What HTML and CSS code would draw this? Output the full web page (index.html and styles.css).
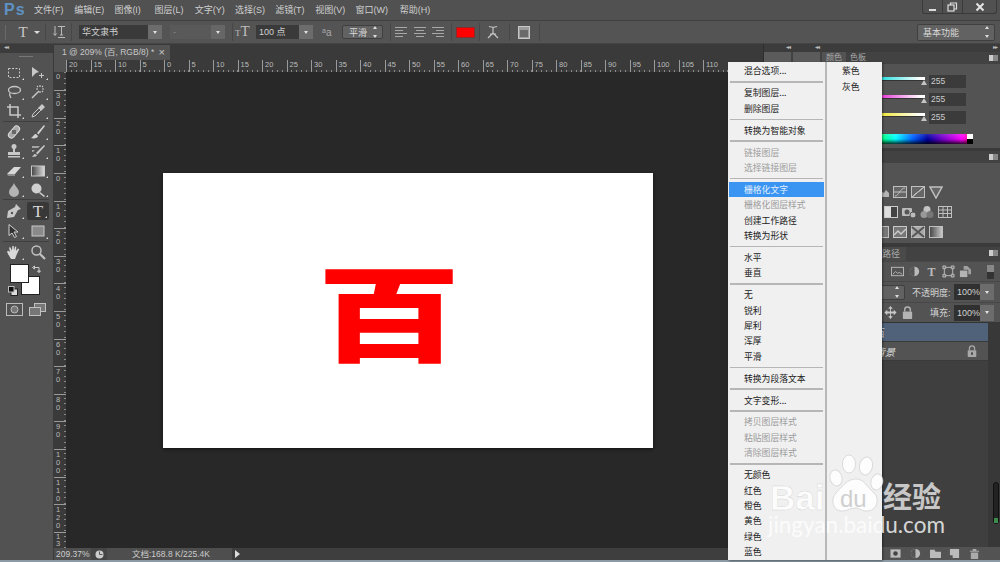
FILE: index.html
```html
<!DOCTYPE html>
<html lang="zh">
<head>
  <meta charset="UTF-8">
  <title>Photoshop</title>
  <link rel="stylesheet" href="styles.css">
</head>
<body>
  <!-- Menu bar -->
  <header class="menubar">
    <span class="logo">Ps</span>
    <nav class="menus">
      <span>文件(F)</span><span>编辑(E)</span><span>图像(I)</span><span>图层(L)</span><span>文字(Y)</span>
      <span>选择(S)</span><span>滤镜(T)</span><span>视图(V)</span><span>窗口(W)</span><span class="help">帮助(H)</span>
    </nav>
    <div class="winbtns">
      <span class="winbtn"><svg width="10" height="10" viewBox="0 0 10 10"><rect x="1" y="7" width="7" height="2" fill="#ddd"/></svg></span>
      <span class="winbtn"><svg width="11" height="10" viewBox="0 0 11 10" fill="none" stroke="#ddd" stroke-width="1.2"><rect x="1" y="3" width="6" height="6"/><path d="M3.5 3V1h6v6H7"/></svg></span>
      <span class="winbtn wide"><svg width="10" height="10" viewBox="0 0 10 10" stroke="#e4e4e4" stroke-width="2"><path d="M1.5 1.5l7 7M8.5 1.5l-7 7"/></svg></span>
    </div>
  </header>

  <!-- Options bar -->
  <section class="options">
    <span class="grip"></span>
    <span class="opt-t">T</span>
    <span class="caret"></span>
    <span class="opt-sep s1"></span>
    <svg class="opt-orient" width="14" height="14" viewBox="0 0 14 14" fill="none" stroke="#bbb"><path d="M3 1v9M1.5 8.500L3 10.500l1.500-2M6 1.500h7M9.500 1.500V10M8 10h3M6 12.500h7"/></svg>
    <span class="opt-sep s2"></span>
    <div class="combo font"><span class="combo-text">华文隶书</span><i class="combo-btn"></i></div>
    <div class="combo style off"><span class="combo-text">-</span><i class="combo-btn"></i></div>
    <span class="opt-sep s3"></span>
    <span class="opt-size"><small>T</small>T</span>
    <div class="combo size"><span class="combo-text">100 点</span><i class="combo-btn"></i></div>
    <span class="opt-aa"><small>a</small>a</span>
    <div class="spin aa"><span>平滑</span><i class="updown"></i></div>
    <span class="opt-sep s4"></span>
    <div class="aligns">
      <svg width="14" height="12" viewBox="0 0 14 12" stroke="#a8a8a8"><path d="M1 1.500h12M1 4.500h8M1 7.500h12M1 10.500h8"/></svg>
      <svg width="14" height="12" viewBox="0 0 14 12" stroke="#a8a8a8"><path d="M1 1.500h12M3 4.500h8M1 7.500h12M3 10.500h8"/></svg>
      <svg width="14" height="12" viewBox="0 0 14 12" stroke="#a8a8a8"><path d="M1 1.500h12M5 4.500h8M1 7.500h12M5 10.500h8"/></svg>
    </div>
    <span class="opt-sep s5"></span>
    <span class="swatch"></span>
    <span class="opt-sep s6"></span>
    <svg class="opt-warp" width="14" height="17" viewBox="0 0 14 17" fill="none" stroke="#c4c4c4" stroke-width="1.200"><path d="M3 2.500q4 1.500 8 0M7 3v6M7 9l-5 5M7 9l5 5M4 10h6"/></svg>
    <span class="opt-sep s7"></span>
    <svg class="opt-panel" width="12" height="13" viewBox="0 0 12 13"><rect x=".5" y=".5" width="11" height="12" fill="#9c9c9c" stroke="#c8c8c8"/><rect x="2" y="4" width="8" height="7" fill="#6a6a6a"/></svg>
    <span class="opt-sep s7"></span>
    <div class="spin workspace"><span>基本功能</span><i class="updown"></i></div>
  </section>

  <main class="workspace-row">
    <!-- Tools -->
    <aside class="toolbar">
      <div class="strip"><span class="arrows">◂◂</span></div>
      <span class="tool-grip"></span>
      <div class="tools">
        <span class="tool"><svg viewBox="0 0 16 16" fill="none" stroke="#c8c8c8" stroke-dasharray="2 1.500"><rect x="2.500" y="3.500" width="11" height="9"/></svg></span>
        <span class="tool"><svg viewBox="0 0 16 16" fill="#c8c8c8"><path d="M2 2l7 5-3 1-4 4z"/><path d="M11 8h1v2h2v1h-2v2h-1v-2H9v-1h2z"/></svg></span>
        <span class="tool"><svg viewBox="0 0 16 16" fill="none" stroke="#c8c8c8" stroke-width="1.300"><ellipse cx="8.500" cy="6" rx="6" ry="3.500"/><path d="M4 9c-1 2 0 3 1 5"/></svg></span>
        <span class="tool"><svg viewBox="0 0 16 16" fill="none" stroke="#c8c8c8" stroke-width="1.500"><path d="M2 14l7-7"/><path d="M10 1v2M10 7v2M6 5h2M12 5h2M7 2l1 1M13 2l-1 1M13 8l-1-1" stroke-width="1.200"/></svg></span>
        <span class="tool"><svg viewBox="0 0 16 16" fill="none" stroke="#c8c8c8" stroke-width="1.500"><path d="M4 1v11h11M1 4h11v11"/></svg></span>
        <span class="tool"><svg viewBox="0 0 16 16" fill="#c8c8c8"><path d="M2 14l1-3 6-6 2 2-6 6z" fill="none" stroke="#c8c8c8"/><path d="M9 4l3-3 3 3-3 3 0 1-4-4z"/></svg></span>
        <span class="tool-sep"></span>
        <span class="tool"><svg viewBox="0 0 16 16" fill="#a8a8a8" stroke="#ddd"><rect x="1" y="5" width="14" height="6" rx="3" transform="rotate(-50 8 8)"/><rect x="6" y="6" width="4" height="4" fill="#666" stroke="none"/></svg></span>
        <span class="tool"><svg viewBox="0 0 16 16" fill="#d0d0d0"><path d="M14 1L7 9l1.500 1.500L15 2z"/><path d="M6 10c-2 0-2 2-5 4 3 1 7 0 7-2z"/></svg></span>
        <span class="tool"><svg viewBox="0 0 16 16" fill="#c8c8c8"><circle cx="8" cy="3.500" r="2.500"/><rect x="7" y="5" width="2" height="4"/><rect x="2" y="9" width="12" height="3"/><rect x="2" y="13" width="12" height="1.500"/></svg></span>
        <span class="tool"><svg viewBox="0 0 16 16" fill="#c8c8c8"><path d="M14 2L6 10l1.500 1.500L15 3z"/><path d="M5 11c-1 0-2 2-3 3 3 0 5-1 5-2z"/><path d="M2 3h8L8 5H2zM2 7h3L3 9H2z" opacity=".7"/></svg></span>
        <span class="tool"><svg viewBox="0 0 16 16" fill="#d8d8d8"><path d="M1 11l7-7h7l-6 7z"/><path d="M1 11h8v2H2z" fill="#8c8c8c"/></svg></span>
        <span class="tool"><svg viewBox="0 0 16 16"><defs><linearGradient id="gr"><stop offset="0" stop-color="#444"/><stop offset="1" stop-color="#ddd"/></linearGradient></defs><rect x="1.500" y="3" width="13" height="10" fill="url(#gr)" stroke="#c8c8c8"/></svg></span>
        <span class="tool"><svg viewBox="0 0 16 16" fill="#b4b4b4"><path d="M8 1c1 3 5 6 5 9a5 5 0 0 1-10 0c0-3 4-6 5-9z"/></svg></span>
        <span class="tool"><svg viewBox="0 0 16 16" fill="#d0d0d0"><circle cx="6.500" cy="6.500" r="5"/><path d="M10 10l5 4-1 1-5-4z"/></svg></span>
        <span class="tool-sep"></span>
        <span class="tool"><svg viewBox="0 0 16 16" fill="#c8c8c8"><path d="M10 1l5 5-3 1-4 7-7 1 1-7 7-4z"/><circle cx="6" cy="10" r="1.200" fill="#535353"/></svg></span>
        <span class="tool active"><span class="tool-t">T</span></span>
        <span class="tool"><svg viewBox="0 0 16 16" fill="#333" stroke="#d0d0d0"><path d="M3 1.500v11l3-2.500 2.500 4.500 2-1L8 9h4z"/></svg></span>
        <span class="tool"><svg viewBox="0 0 16 16"><rect x="2" y="3" width="12" height="10" fill="#8a8a8a" stroke="#c8c8c8"/></svg></span>
        <span class="tool-sep"></span>
        <span class="tool"><svg viewBox="0 0 16 16" fill="#d8d8d8"><path d="M4 8L3 3.500l1.300-.3L6 6.500 6.300 2h1.400l.3 4.500L9 2.500l1.300.3L10 7l2-2.500 1.200.7L10.500 11 9 15H5L2 10 1 7.500l1.200-.8z"/></svg></span>
        <span class="tool plain"><svg viewBox="0 0 16 16" fill="none" stroke="#c0c0c0" stroke-width="1.500"><circle cx="6.500" cy="6.500" r="4.500"/><path d="M10 10l5 5" stroke-width="2.200"/></svg></span>
      </div>
      <div class="colors">
        <span class="color-bg"></span>
        <span class="color-fg"></span>
        <svg class="color-swap" width="10" height="10" viewBox="0 0 10 10" fill="none" stroke="#ccc"><path d="M2 3.500h5v5M.5 3.500L2.500 2v3zM7 8.500L5.500 7h3z"/></svg>
        <svg class="color-def" width="10" height="10" viewBox="0 0 10 10"><rect x="3" y="3" width="6.500" height="6.500" fill="#ddd" stroke="#222"/><rect x=".5" y=".5" width="5.500" height="5.500" fill="#111" stroke="#bbb"/></svg>
      </div>
      <div class="modes">
        <svg width="17" height="13" viewBox="0 0 17 13" fill="none" stroke="#bbb"><rect x=".5" y=".5" width="16" height="12"/><circle cx="8.500" cy="6.500" r="3.500" fill="#777"/></svg>
        <svg width="17" height="13" viewBox="0 0 17 13" fill="#777" stroke="#c0c0c0"><rect x="5.500" y=".5" width="11" height="8"/><rect x=".5" y="4.500" width="11" height="8"/></svg>
      </div>
    </aside>

    <!-- Document -->
    <section class="docarea">
      <div class="tabbar">
        <div class="doctab"><span>1 @ 209% (百, RGB/8) *</span><b>×</b></div>
      </div>
      <div class="ruler-h">
        <span class="corner-box"></span>
        <div class="h-marks">
          <span>20</span><span>15</span><span>10</span><span>5</span><span>0</span><span>5</span><span>10</span><span>15</span><span>20</span><span>25</span>
          <span>30</span><span>35</span><span>40</span><span>45</span><span>50</span><span>55</span><span>60</span><span>65</span><span>70</span><span>75</span>
          <span>80</span><span>85</span><span>90</span><span>95</span><span>100</span><span>105</span><span>110</span>
        </div>
      </div>
      <div class="doc-mid">
        <div class="ruler-v">
          <span class="first">0</span>
          <span>30</span><span>20</span><span>10</span><span>0</span><span>10</span><span>20</span><span>30</span><span>40</span><span>50</span>
          <span>60</span><span>70</span><span>80</span><span>90</span><span>100</span><span>110</span><span>120</span><span class="last">13</span>
        </div>
        <div class="pasteboard">
          <div class="canvas"><span class="glyph">百</span></div>
        </div>
      </div>
      <footer class="status">
        <span class="zoom">209.37%</span>
        <span class="st-icon"><svg width="9" height="9" viewBox="0 0 9 9"><circle cx="4.500" cy="4.500" r="4" fill="#ccc"/><path d="M4.500 1.500v3h3" stroke="#555" fill="none"/></svg></span>
        <span class="docsize">文档:168.8 K/225.4K</span>
        <span class="st-arrow"></span>
      </footer>
    </section>

    <!-- Right panels -->
    <aside class="panels">
      <div class="strip dock"><span class="arrows a1">◂◂</span><span class="arrows a2">◂◂</span><span class="arrows a3">▸▸</span></div>
      <div class="tabs">
        <span class="mini"></span><span class="mini"></span>
        <span class="ptab on">颜色</span><span class="ptab">色板</span>
        <i class="pmenu"></i>
      </div>
      <div class="color-panel">
        <div class="slider-row"><span class="slider cy"></span><span class="tri"></span><span class="num">255</span></div>
        <div class="slider-row"><span class="slider mg"></span><span class="tri"></span><span class="num">255</span></div>
        <div class="slider-row"><span class="slider ye"></span><span class="tri"></span><span class="num">255</span></div>
        <div class="spectrum"><i></i></div>
      </div>
      <div class="pheader"><i class="pmenu"></i></div>
      <div class="adjust">
        <div class="adj-row r1">
          <svg viewBox="0 0 14 14"><path d="M0 12h14V8L11 5 9 8 6 6 4 9 0 7z" fill="#b4b4b4"/></svg>
          <svg viewBox="0 0 14 14" fill="#666" stroke="#c0c0c0"><rect x=".5" y="1.500" width="13" height="11"/><path d="M2 11c4 0 5-8 10-8M1 7h12" fill="none"/></svg>
          <svg viewBox="0 0 14 14" stroke="#c0c0c0"><rect x=".5" y="1.500" width="13" height="11" fill="#666"/><path d="M1 12L13 2z" fill="#222"/><path d="M1 12L13 2" fill="none"/></svg>
          <svg viewBox="0 0 14 14" fill="#666" stroke="#c0c0c0" stroke-width="1.500"><path d="M1 2h12L7 13z"/></svg>
        </div>
        <div class="adj-row r2">
          <svg viewBox="0 0 14 14"><rect x=".5" y="1.500" width="13" height="11" fill="#ddd" stroke="#ccc"/><rect x="7" y="2" width="6" height="10" fill="#444"/></svg>
          <svg viewBox="0 0 14 14" fill="#bbb"><rect x="0" y="3" width="10" height="8" rx="1"/><circle cx="5" cy="7" r="2.500" fill="#555"/><circle cx="11" cy="10" r="3" stroke="#555"/></svg>
          <svg viewBox="0 0 14 14" fill="#c4c4c4"><circle cx="7" cy="4.500" r="3.500"/><circle cx="4" cy="9.500" r="3.500" fill="#999"/><circle cx="10" cy="9.500" r="3.500" fill="#777"/></svg>
          <svg viewBox="0 0 14 14" fill="none" stroke="#c0c0c0"><rect x=".5" y="1.500" width="13" height="11"/><path d="M.5 5h13M.5 8.500h13M5 1.500v11M9.500 1.500v11"/></svg>
        </div>
        <div class="adj-row r1">
          <svg viewBox="0 0 14 14"><rect x=".5" y="1.500" width="13" height="11" fill="#777" stroke="#c0c0c0"/></svg>
          <svg viewBox="0 0 14 14" fill="#777" stroke="#c8c8c8"><rect x=".5" y="1.500" width="13" height="11"/><path d="M1 10l4-4 3 3 5-5" fill="none" stroke-width="1.500"/></svg>
          <svg viewBox="0 0 14 14" fill="#aaa" stroke="#c0c0c0"><rect x=".5" y="1.500" width="13" height="11"/><path d="M1 2l12 10M13 2L1 12" stroke="#555" stroke-width="2"/></svg>
          <svg viewBox="0 0 14 14"><defs><linearGradient id="gm"><stop offset="0" stop-color="#444"/><stop offset="1" stop-color="#ccc"/></linearGradient></defs><rect x=".5" y="1.500" width="13" height="11" fill="url(#gm)" stroke="#c0c0c0"/></svg>
        </div>
      </div>
      <div class="tabs layers-tabs">
        <span class="ptab paths">路径</span>
        <i class="pmenu"></i>
      </div>
      <div class="filter-row">
        <svg viewBox="0 0 14 14" fill="none" stroke="#bbb"><rect x=".5" y="2.500" width="13" height="9"/><path d="M2 10l3-3 2 2 2-1 3 2" /></svg>
        <svg viewBox="0 0 14 14"><circle cx="7" cy="7" r="5" fill="#bbb"/><path d="M7 2a5 5 0 0 0 0 10z" fill="#555"/></svg>
        <span class="filter-t">T</span>
        <svg viewBox="0 0 14 14" fill="none" stroke="#bbb"><rect x="2.500" y="2.500" width="9" height="9"/><path d="M1 1h3v3H1zM10 1h3v3h-3zM1 10h3v3H1zM10 10h3v3h-3z" fill="#777"/></svg>
        <svg viewBox="0 0 14 14" fill="#b4b4b4"><path d="M1 6h8v7H1z"/><path d="M5 5V1h4l4 4v5h-3V5z" opacity=".8"/></svg>
        <span class="filter-toggle"></span>
      </div>
      <div class="mode-row">
        <div class="spin blend"><i class="updown"></i></div>
        <span class="lbl">不透明度:</span>
        <div class="combo pct"><span class="combo-text">100%</span><i class="combo-btn"></i></div>
      </div>
      <div class="lock-row">
        <svg viewBox="0 0 14 14" fill="#c8c8c8"><path d="M7 0l2.500 3h-2v3h3V4l3 3-3 3V8h-3v3h2L7 14l-2.500-3h2V8h-3v2l-3-3 3-3v2h3V3h-2z"/></svg>
        <svg viewBox="0 0 14 14" fill="#b4b4b4"><rect x="2" y="6" width="10" height="8" rx="1"/><path d="M4 6V4a3 3 0 0 1 6 0v2" fill="none" stroke="#b4b4b4" stroke-width="1.500"/></svg>
        <span class="lbl fill">填充:</span>
        <div class="combo pct"><span class="combo-text">100%</span><i class="combo-btn"></i></div>
      </div>
      <div class="layers">
        <div class="layer-list">
          <div class="layer sel"><span>百</span></div>
          <div class="layer bgl"><em>背景</em>
            <svg viewBox="0 0 14 14" fill="#a8a8a8"><rect x="2" y="6" width="10" height="8" rx="1"/><path d="M4 6V4a3 3 0 0 1 6 0v2" fill="none" stroke="#a8a8a8" stroke-width="1.500"/><rect x="6" y="8.500" width="2" height="3" fill="#444"/></svg>
          </div>
        </div>
        <div class="layer-scroll"><span class="scroll-thumb"><i></i></span></div>
      </div>
      <div class="layer-foot">
        <svg viewBox="0 0 12 12"><rect x=".5" y="1.500" width="11" height="9" fill="#bbb"/><circle cx="6" cy="6" r="2.500" fill="#444"/></svg>
        <svg viewBox="0 0 12 12"><circle cx="6" cy="6" r="5" fill="#bbb"/><path d="M6 1a5 5 0 0 0 0 10z" fill="#555"/></svg>
        <svg viewBox="0 0 12 12" fill="#bbb"><path d="M0 2h5l1 2h6v7H0z"/></svg>
        <svg viewBox="0 0 12 12" fill="#bbb"><path d="M1 1h10v10H4V8H1z"/></svg>
        <svg viewBox="0 0 12 12" fill="#aaa"><path d="M1 3h10v1H1zM4 1h4v2H4zM2 5h8v7H2z"/></svg>
      </div>
    </aside>
  </main>
  <div class="taskstrip"></div>

  <!-- Context menu -->
  <div class="ctx">
    <div class="ctx-main">
      <div class="mi">混合选项...</div>
      <div class="ms"></div>
      <div class="mi">复制图层...</div>
      <div class="mi">删除图层</div>
      <div class="ms"></div>
      <div class="mi">转换为智能对象</div>
      <div class="ms"></div>
      <div class="mi off">链接图层</div>
      <div class="mi off">选择链接图层</div>
      <div class="ms"></div>
      <div class="mi hl">栅格化文字</div>
      <div class="mi off">栅格化图层样式</div>
      <div class="mi">创建工作路径</div>
      <div class="mi">转换为形状</div>
      <div class="ms"></div>
      <div class="mi">水平</div>
      <div class="mi">垂直</div>
      <div class="ms"></div>
      <div class="mi">无</div>
      <div class="mi">锐利</div>
      <div class="mi">犀利</div>
      <div class="mi">浑厚</div>
      <div class="mi">平滑</div>
      <div class="ms"></div>
      <div class="mi">转换为段落文本</div>
      <div class="ms"></div>
      <div class="mi">文字变形...</div>
      <div class="ms"></div>
      <div class="mi off">拷贝图层样式</div>
      <div class="mi off">粘贴图层样式</div>
      <div class="mi off">清除图层样式</div>
      <div class="ms"></div>
      <div class="mi">无颜色</div>
      <div class="mi">红色</div>
      <div class="mi">橙色</div>
      <div class="mi">黄色</div>
      <div class="mi">绿色</div>
      <div class="mi">蓝色</div>
    </div>
    <div class="ctx-sub">
      <div class="mi">紫色</div>
      <div class="mi">灰色</div>
    </div>
  </div>

  <!-- Baidu watermark -->
  <div class="mark">
    <span class="mark-bai">Bai</span>
    <svg class="mark-paw" width="58" height="62" viewBox="0 0 58 62" fill="rgba(255,255,255,.85)" stroke="rgba(170,170,170,.35)"><ellipse cx="9" cy="24" rx="6" ry="8" transform="rotate(-15 9 24)"/><ellipse cx="22" cy="10" rx="6.500" ry="9"/><ellipse cx="39" cy="12" rx="6.500" ry="9" transform="rotate(12 39 12)"/><ellipse cx="50" cy="28" rx="6" ry="8" transform="rotate(15 50 28)"/><path d="M29 25c8 0 11 8 18 14 6 6 3 18-7 18-6 0-7-3-12-3s-7 3-13 3C6 57 3 46 9 39c6-6 11-14 20-14z"/></svg>
    <span class="mark-du">du</span>
    <span class="mark-jy">经验</span>
    <span class="mark-url">jingyan.baidu.com</span>
  </div>
</body>
</html>
```

FILE: styles.css
```css
* {
  box-sizing: border-box;
}
html, body {
  margin: 0;
  width: 1000px;
  height: 562px;
  overflow: hidden;
}
body {
  position: relative;
  display: flex;
  flex-direction: column;
  background: #535353;
  color: #d0d0d0;
  font-family: "Liberation Sans", "Noto Sans CJK SC", sans-serif;
  font-size: 9px;
}

/* Menu bar */
.menubar {
  height: 21px;
  flex: none;
  display: flex;
  align-items: flex-start;
  background: #515151;
  border-bottom: 1px solid #404040;
}
.logo {
  width: 34px;
  padding-left: 4px;
  font: bold 16px/20px "Liberation Sans", sans-serif;
  color: #5f92c4;
  letter-spacing: 1px;
}
.menus {
  display: flex;
  line-height: 20px;
  color: #cfcfcf;
  font-size: 9px;
}
.menus span {
  width: 40.2px;
  white-space: nowrap;
}
.menus .help {
  margin-left: 4px;
}
.winbtns {
  margin-left: auto;
  margin-right: 3px;
  display: flex;
  height: 14px;
  border: 1px solid #3a3a3a;
  border-top: 0;
  border-radius: 0 0 3px 3px;
}
.winbtn {
  width: 20px;
  display: flex;
  align-items: center;
  justify-content: center;
  border-right: 1px solid #3a3a3a;
}
.winbtn.wide {
  width: 33px;
  border-right: 0;
}

/* Options bar */
.options {
  height: 23px;
  flex: none;
  display: flex;
  align-items: center;
  background: #545454;
  border-bottom: 1px solid #444;
  padding-left: 5px;
}
.options > * {
  flex: none;
}
.grip {
  width: 1px;
  height: 15px;
  background: #6a6a6a;
  margin-right: 10px;
}
.opt-t {
  width: 14px;
  font: 15px/15px "Liberation Serif", serif;
  color: #c8c8c8;
  text-align: center;
}
.caret {
  width: 0;
  height: 0;
  margin-left: 4px;
  border: 3px solid transparent;
  border-top: 3px solid #ddd;
  border-bottom: 0;
}
.opt-sep {
  width: 1px;
  height: 18px;
  background: #474747;
}
.s1 { margin: 0 6px 0 5px; }
.s2 { margin: 0 7px 0 5px; }
.s3 { margin: 0 2px 0 7px; }
.s4 { margin: 0 -4px 0 7px; }
.s5 { margin: 0 4px 0 6px; }
.s6 { margin: 0 6px 0 4px; }
.s7 { margin: 0 8px 0 9px; }
.s4 + .aligns {
  margin-left: 7px;
}
.combo {
  display: flex;
  height: 14px;
  line-height: 14px;
}
.combo-text {
  flex: 1;
  background: #3a3a3a;
  padding-left: 3px;
  color: #d0d0d0;
  white-space: nowrap;
  overflow: hidden;
}
.combo-btn {
  width: 14px;
  background: #6c6c6c;
  display: flex;
  align-items: center;
  justify-content: center;
}
.combo-btn::after {
  content: "";
  border: 2.5px solid transparent;
  border-top: 3px solid #e0e0e0;
  border-bottom: 0;
}
.combo.font {
  width: 83px;
}
.combo.style {
  width: 55px;
  margin-left: 8px;
}
.combo.off .combo-text {
  background: #595959;
  color: #888;
}
.combo.off .combo-btn {
  background: #666;
}
.combo.size {
  width: 57px;
  margin-left: 4px;
}
.opt-size {
  width: 17px;
  font: 15px/15px "Liberation Serif", serif;
  color: #bdbdbd;
  white-space: nowrap;
}
.opt-size small {
  font-size: 9px;
}
.opt-aa {
  margin-left: 9px;
  width: 14px;
  font: 10px/12px "Liberation Sans", sans-serif;
  color: #aaa;
}
.opt-aa small {
  font-size: 7px;
  vertical-align: 3px;
}
.spin {
  display: flex;
  align-items: center;
  justify-content: space-between;
  height: 14px;
  padding: 0 4px 0 6px;
  background: #626262;
  border: 1px solid #3f3f3f;
  border-radius: 2px;
  color: #d8d8d8;
}
.spin.aa {
  width: 41px;
  margin-left: 6px;
}
.updown {
  width: 5px;
  height: 8px;
  position: relative;
}
.updown::before, .updown::after {
  content: "";
  position: absolute;
  left: 0;
  border: 2.5px solid transparent;
}
.updown::before {
  top: -2px;
  border-bottom: 3px solid #ddd;
  border-top: 0;
}
.updown::after {
  bottom: -2px;
  border-top: 3px solid #ddd;
  border-bottom: 0;
}
.aligns {
  display: flex;
  gap: 4.5px;
}
.swatch {
  width: 19px;
  height: 11px;
  background: #f00;
  border: 1px solid #8a2a2a;
}
.spin.workspace {
  width: 78px;
  height: 17px;
  margin-left: auto;
  margin-right: 5px;
  padding-left: 5px;
}

/* Main row */
.workspace-row {
  flex: 1;
  min-height: 0;
  display: flex;
}
.strip {
  height: 9px;
  background: #3c3c3c;
  position: relative;
}
.arrows {
  position: absolute;
  top: -2px;
  font-size: 6px;
  line-height: 10px;
  letter-spacing: -1px;
  color: #bbb;
}

/* Tools */
.toolbar {
  width: 54px;
  flex: none;
  background: #525252;
  border-right: 1px solid #3a3a3a;
}
.toolbar .arrows {
  left: 4px;
}
.tool-grip {
  display: block;
  height: 1px;
  width: 14px;
  margin: 3px 0 6px 19px;
  background: #777;
}
.tools {
  display: grid;
  grid-template-columns: 24px 24px;
  grid-template-rows: repeat(3, 19.3px) 1.4px repeat(4, 19.3px) 2px repeat(2, 19.8px) 1.4px 19.3px;
  margin-left: 2px;
}
.tool {
  display: flex;
  align-items: center;
  justify-content: center;
  position: relative;
}
.tool svg {
  width: 16px;
  height: 16px;
}
.tool::after {
  content: "";
  position: absolute;
  right: 2px;
  bottom: 2px;
  border: 1.5px solid transparent;
  border-right-color: #ddd;
  border-bottom-color: #ddd;
}
.tool.plain::after {
  display: none;
}
.tool-sep {
  grid-column: span 2;
  height: 1px;
  background: #3f3f3f;
  margin: 0 1px;
}
.tool.active {
  background: #383838;
  border-radius: 2px;
  margin: 1px;
}
.tool-t {
  font: 17px/17px "Liberation Serif", serif;
  color: #d8d8d8;
}
.colors {
  position: relative;
  height: 36px;
  margin-top: 2.5px;
}
.color-bg, .color-fg {
  position: absolute;
  width: 19px;
  height: 19px;
  background: #fff;
  border: 1px solid #222;
}
.color-fg {
  left: 10px;
  top: 0;
}
.color-bg {
  left: 21px;
  top: 12px;
}
.color-swap {
  position: absolute;
  left: 32px;
  top: 0;
}
.color-def {
  position: absolute;
  left: 8px;
  top: 22px;
}
.modes {
  display: flex;
  justify-content: space-between;
  width: 40px;
  margin: 3px 0 0 6px;
}

/* Document */
.docarea {
  width: 709px;
  flex: none;
  display: flex;
  flex-direction: column;
  background: #282828;
}
.tabbar {
  height: 16px;
  flex: none;
  background: #3a3a3a;
  padding-top: 1px;
}
.doctab {
  width: 116px;
  height: 15px;
  display: flex;
  justify-content: space-between;
  padding: 0 5px 0 8px;
  background: #535353;
  line-height: 15px;
  color: #c8c8c8;
  font-size: 8.5px;
  white-space: nowrap;
}
.doctab b {
  font-weight: normal;
  font-size: 11px;
}
.ruler-h {
  height: 12px;
  flex: none;
  display: flex;
  background: #3a3a3a;
}
.corner-box {
  width: 12px;
  flex: none;
  background: #535353;
}
.h-marks {
  display: flex;
  flex: 1;
  overflow: hidden;
  background: repeating-linear-gradient(90deg, #8a8a8a 0 1px, transparent 1px 4.9px) 0 10px / 100% 2px no-repeat;
}
.h-marks span {
  width: 24.5px;
  flex: none;
  height: 12px;
  padding-left: 2px;
  border-left: 1px solid #9a9a9a;
  font-size: 7.5px;
  line-height: 10px;
  color: #bcbcbc;
}
.doc-mid {
  flex: 1;
  min-height: 0;
  display: flex;
}
.ruler-v {
  width: 12px;
  flex: none;
  overflow: hidden;
  background: #3a3a3a;
  background-image: repeating-linear-gradient(180deg, #8a8a8a 0 1px, transparent 1px 5.52px);
  background-size: 2px 100%;
  background-repeat: no-repeat;
  background-position: right 0;
}
.ruler-v span {
  display: block;
  width: 100%;
  height: 27.6px;
  padding: 1px 3px 0 2px;
  border-top: 1px solid #9a9a9a;
  font-size: 7.5px;
  line-height: 8px;
  color: #bcbcbc;
  word-break: break-all;
}
.ruler-v span.first {
  height: 18.2px;
  border-top: 0;
}
.ruler-v span.last {
  height: 16px;
  padding-top: 0;
  line-height: 7.5px;
}
.pasteboard {
  flex: 1;
  padding: 101px 0 0 97px;
}
.canvas {
  width: 490px;
  height: 275px;
  background: #fff;
  box-shadow: 0 1px 3px #111;
  display: flex;
  padding: 86px 0 0 159px;
}
.glyph {
  display: block;
  width: 134px;
  height: 100px;
  font: 900 104px/100px "Noto Sans CJK SC", sans-serif;
  color: #f00;
  text-align: center;
  transform: scaleX(1.38);
  filter: blur(.5px);
}
.status {
  height: 12px;
  flex: none;
  display: flex;
  align-items: center;
  background: #3e3e3e;
  color: #ccc;
  font-size: 8.5px;
  line-height: 12px;
}
.zoom {
  width: 37px;
  padding-left: 2px;
  background: #4e4e4e;
}
.st-icon {
  width: 16px;
  height: 12px;
  display: flex;
  align-items: center;
  justify-content: center;
  background: #454545;
}
.docsize {
  width: 125px;
  padding-left: 25px;
  background: #4e4e4e;
  white-space: nowrap;
}
.st-arrow {
  margin-left: 3px;
  border: 4px solid transparent;
  border-left: 5px solid #ddd;
  border-right: 0;
}

/* Right panels */
.panels {
  flex: 1;
  min-width: 0;
  display: flex;
  flex-direction: column;
  background: #3a3a3a;
  border-left: 1px solid #2e2e2e;
}
.dock {
  height: 8px;
}
.a1 { left: 22px; }
.a2 { left: 51px; }
.a3 { right: 3px; }
.tabs {
  height: 12px;
  flex: none;
  display: flex;
  align-items: flex-end;
  background: #424242;
  position: relative;
  color: #aaa;
}
.mini {
  width: 27px;
  height: 12px;
  background: #5b5b5b;
  margin-right: 2px;
}
.ptab {
  padding: 0 4px;
  height: 12px;
  line-height: 12px;
  font-size: 8px;
}
.ptab.on {
  background: #535353;
}
.pmenu {
  position: absolute;
  right: 2px;
  top: 3px;
  width: 9px;
  height: 6px;
  border-left: 4px solid #ccc;
  background: #888;
}
.color-panel {
  height: 84px;
  flex: none;
  background: #535353;
  padding: 11px 0 0 118px;
}
.slider-row {
  height: 18px;
  display: flex;
  align-items: flex-start;
  position: relative;
}
.slider {
  width: 43px;
  height: 4px;
  margin-top: 2px;
  border: 1px solid #333;
  border-width: 0 0 1px;
}
.slider.cy { background: linear-gradient(90deg, #2fe0e0, #fff 90%); }
.slider.mg { background: linear-gradient(90deg, #e83fd8, #fff 90%); }
.slider.ye { background: linear-gradient(90deg, #f2e83a, #fff 90%); }
.tri {
  position: absolute;
  left: 39px;
  top: 5px;
  border: 3.5px solid transparent;
  border-bottom: 5px solid #c4c4c4;
  border-top: 0;
}
.num {
  width: 37px;
  height: 13px;
  margin-left: 4px;
  background: #3b3b3b;
  line-height: 13px;
  padding-left: 2px;
  font-size: 8.5px;
  color: #ccc;
}
.spectrum {
  width: 91px;
  height: 10px;
  margin-top: 5px;
  position: relative;
  background: linear-gradient(90deg, #00ff80, #00ffff 15%, #0060ff 34%, #0000a0 50%, #8000d0 68%, #ff00ff 88%, #ff0060);
}
.spectrum::before {
  content: "";
  position: absolute;
  inset: 0;
  background: linear-gradient(180deg, rgba(255,255,255,.15), transparent 50%, rgba(0,0,0,.8));
}
.spectrum i {
  position: absolute;
  right: 0;
  top: 0;
  width: 6px;
  height: 10px;
  background: linear-gradient(180deg, #fff 50%, #000 50%);
}
.pheader {
  height: 12px;
  flex: none;
  margin-top: 3px;
  background: #424242;
  position: relative;
}
.adjust {
  height: 80px;
  flex: none;
  background: #535353;
  padding-top: 19px;
}
.adj-row {
  display: flex;
  gap: 4px;
  height: 20px;
  align-items: center;
}
.adj-row svg {
  width: 14px;
  height: 14px;
  flex: none;
}
.r1 {
  padding-left: 111px;
}
.r2 {
  padding-left: 120px;
}
.layers-tabs {
  height: 14px;
  margin-top: 4px;
}
.ptab.paths {
  margin-left: 111px;
  padding: 0 6px 0 7px;
  height: 14px;
  line-height: 14px;
  font-size: 9px;
  background: #4a4a4a;
}
.filter-row, .lock-row {
  height: 20px;
  flex: none;
  display: flex;
  align-items: center;
  background: #535353;
  border-top: 1px solid #474747;
  position: relative;
}
.filter-row {
  gap: 4px;
  padding-left: 127px;
}
.filter-row svg, .lock-row svg {
  width: 13px;
  height: 13px;
  flex: none;
}
.filter-t {
  width: 13px;
  text-align: center;
  font: bold 12px/14px "Liberation Serif", serif;
  color: #bbb;
}
.filter-toggle {
  width: 7px;
  height: 14px;
  margin-left: 11px;
  background: linear-gradient(180deg, #888 50%, #333 50%);
}
.mode-row {
  height: 21px;
  flex: none;
  display: flex;
  align-items: center;
  background: #535353;
  border-top: 1px solid #474747;
}
.spin.blend {
  width: 141px;
  margin-right: 7px;
  height: 15px;
  justify-content: flex-end;
}
.lbl {
  width: 42px;
  flex: none;
  font-size: 9px;
  color: #d4d4d4;
  white-space: nowrap;
}
.combo.pct {
  width: 40px;
  height: 16px;
  line-height: 16px;
}
.combo.pct .combo-text {
  background: #303030;
}
.lock-row {
  padding-left: 120px;
}
.lock-row svg {
  margin-right: 4px;
}
.lbl.fill {
  width: 24px;
  margin-left: 12px;
}
.layers {
  flex: 1;
  min-height: 0;
  display: flex;
  background: #3f3f3f;
}
.layer-list {
  flex: 1;
  border-top: 1px solid #333;
}
.layer {
  height: 19px;
  border-bottom: 1px solid #3a3a3a;
  display: flex;
  align-items: center;
  justify-content: space-between;
  background: #535353;
  padding-left: 111px;
  padding-right: 10px;
  font-size: 10px;
  color: #ddd;
}
.layer.sel {
  background: #50627a;
}
.layer svg {
  width: 12px;
  height: 12px;
}
.layer-scroll {
  width: 12px;
  flex: none;
  background: #383838;
  position: relative;
}
.scroll-thumb {
  position: absolute;
  left: 5px;
  top: 160px;
  width: 6px;
  height: 42px;
  background: #222;
  border: 1px solid #111;
  border-radius: 3px;
}
.scroll-thumb i {
  position: absolute;
  left: 0;
  right: 0;
  bottom: 0;
  height: 5px;
  background: #3d8a4d;
}
.layer-foot {
  height: 13px;
  flex: none;
  display: flex;
  align-items: center;
  gap: 8.75px;
  background: #535353;
  padding-left: 126px;
}
.layer-foot svg {
  width: 11px;
  height: 11px;
}
.taskstrip {
  height: 2px;
  flex: none;
  background: #8c9aa6;
}

/* Context menu */
.ctx {
  position: absolute;
  left: 728px;
  top: 62px;
  width: 154px;
  height: 498px;
  display: flex;
  background: #f0f0f0;
  box-shadow: 1px 1px 2px rgba(0,0,0,.4);
  color: #222;
}
.ctx-main {
  width: 99px;
  flex: none;
  padding: 1.3px 1px 0;
  border-right: 2px solid #b8b8b8;
}
.ctx-sub {
  flex: 1;
  padding-top: 1.3px;
}
.mi {
  height: 15.37px;
  line-height: 15.37px;
  padding-left: 15px;
  font-size: 8.8px;
  font-family: "Noto Sans CJK SC", sans-serif;
  white-space: nowrap;
}
.ctx-sub .mi {
  height: 16px;
}
.mi.off {
  color: #9c9c9c;
}
.mi.hl {
  background: #3a95f2;
  color: #e4f0ff;
}
.ms {
  height: 6.6px;
  display: flex;
  align-items: center;
  padding: 0 1px;
}
.ms::after {
  content: "";
  flex: 1;
  height: 1.5px;
  background: #b6b6b6;
}

/* Watermark */
.mark {
  position: absolute;
  left: 768px;
  top: 450px;
  width: 180px;
  height: 92px;
}
.mark span {
  position: absolute;
  white-space: nowrap;
}
.mark-bai {
  left: 2px;
  top: 26px;
  font: bold 35px/44px "Liberation Sans", sans-serif;
  color: rgba(255,255,255,.85);
  -webkit-text-stroke: .4px rgba(150,150,150,.4);
}
.mark-paw {
  position: absolute;
  left: 59px;
  top: 4px;
}
.mark-du {
  left: 72px;
  top: 34px;
  font: 24px/30px "Liberation Sans", sans-serif;
  color: #cfcfcf;
}
.mark-jy {
  left: 115px;
  top: 27px;
  font: 700 29px/36px "Noto Sans CJK SC", sans-serif;
  color: rgba(225,225,225,.85);
}
.mark-url {
  left: 0;
  top: 63px;
  font: 22.5px/24px "Lato", sans-serif;
  color: rgba(255,255,255,.8);
}
```
